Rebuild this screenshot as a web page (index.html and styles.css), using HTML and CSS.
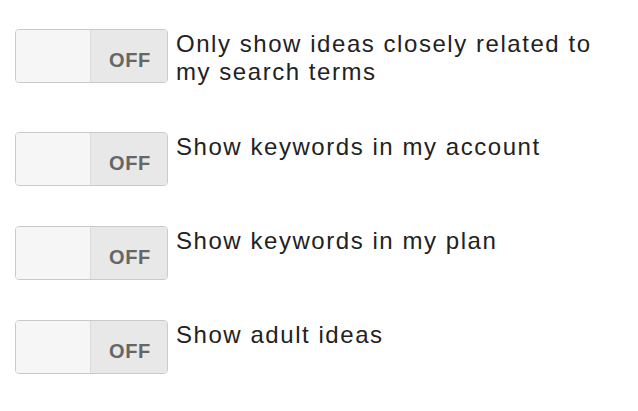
FILE: index.html
```html
<!DOCTYPE html>
<html>
<head>
<meta charset="utf-8">
<link rel="stylesheet" href="styles.css">
</head>
<body>
<div class="list">
  <div class="row">
    <div class="toggle"><span class="knob"></span><span class="state">OFF</span></div>
    <div class="label">Only show ideas closely related to<br>my search terms</div>
  </div>
  <div class="row">
    <div class="toggle"><span class="knob"></span><span class="state">OFF</span></div>
    <div class="label">Show keywords in my account</div>
  </div>
  <div class="row">
    <div class="toggle"><span class="knob"></span><span class="state">OFF</span></div>
    <div class="label">Show keywords in my plan</div>
  </div>
  <div class="row">
    <div class="toggle"><span class="knob"></span><span class="state">OFF</span></div>
    <div class="label">Show adult ideas</div>
  </div>
</div>
</body>
</html>
```
FILE: styles.css
```css
html, body {
  margin: 0;
  padding: 0;
  background: #ffffff;
}
.list {
  display: flex;
  flex-direction: column;
  gap: 40px;
  padding: 29px 0 0 15px;
  font-family: "Liberation Sans", Arial, sans-serif;
}
.row {
  display: flex;
  align-items: flex-start;
  gap: 8px;
}
.toggle {
  display: flex;
  width: 151px;
  height: 52px;
  border: 1px solid #cacaca;
  border-radius: 4px;
  overflow: hidden;
  flex: none;
}
.knob {
  width: 74px;
  background: #f6f6f6;
  border-right: 1px solid #dadada;
}
.state {
  flex: 1;
  background: #e8e8e8;
  color: #666666;
  font-weight: bold;
  font-size: 20px;
  letter-spacing: 0.6px;
  display: flex;
  align-items: center;
  justify-content: center;
  padding-top: 9px;
  padding-left: 2px;
}
.label {
  font-size: 24px;
  letter-spacing: 1.55px;
  line-height: 28px;
  color: #222222;
  padding: 1px 0 6px;
}
```
